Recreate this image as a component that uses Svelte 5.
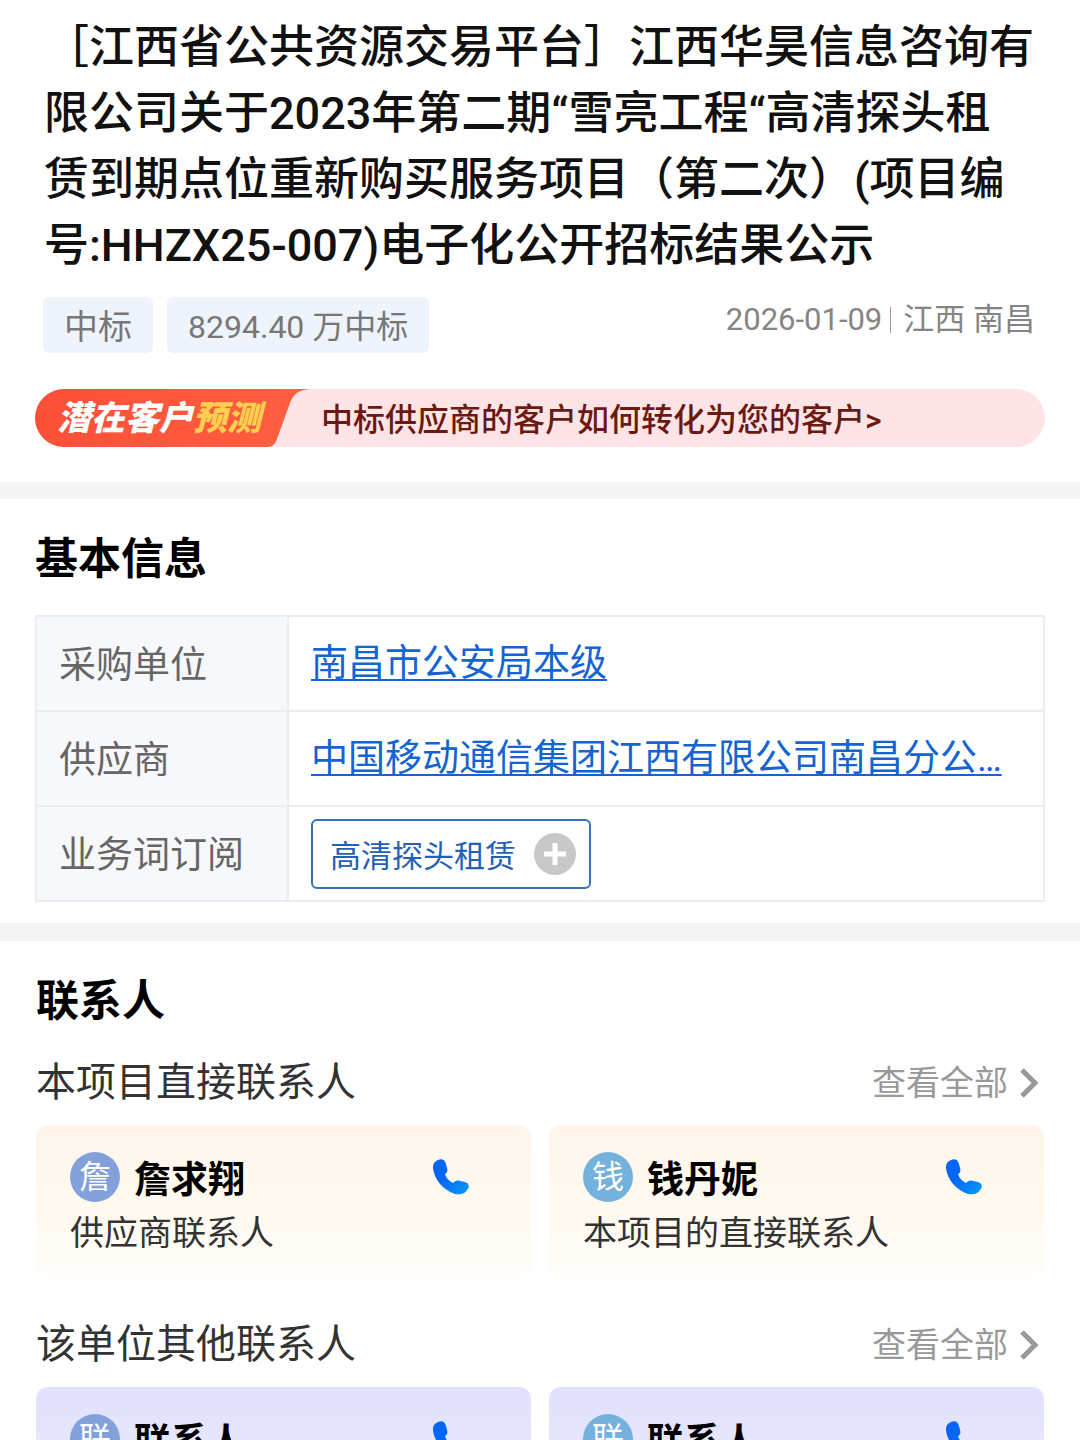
<script>
  const info = [
    { label: '采购单位', link: '南昌市公安局本级' },
    { label: '供应商', link: '中国移动通信集团江西有限公司南昌分公…' },
    { label: '业务词订阅', keyword: '高清探头租赁' },
  ];

  const groups = [
    {
      title: '本项目直接联系人',
      theme: 'warm',
      people: [
        { avatar: '詹', name: '詹求翔', role: '供应商联系人', color: 'indigo' },
        { avatar: '钱', name: '钱丹妮', role: '本项目的直接联系人', color: 'sky' },
      ],
    },
    {
      title: '该单位其他联系人',
      theme: 'violet',
      people: [
        { avatar: '联', name: '联系人', color: 'indigo' },
        { avatar: '联', name: '联系人', color: 'sky' },
      ],
    },
  ];
</script>

<main lang="zh-CN">
  <header class="notice">
    <h1>
      ［江西省公共资源交易平台］江西华昊信息咨询有<br />
      限公司关于2023年第二期“雪亮工程“高清探头租<br />
      赁到期点位重新购买服务项目（第二次）(项目编<br />
      号:HHZX25-007)电子化公开招标结果公示
    </h1>
    <div class="meta">
      <div class="tags">
        <span class="tag stage">中标</span>
        <span class="tag">8294.40 万中标</span>
      </div>
      <div class="origin">
        <time datetime="2026-01-09">2026-01-09</time>
        <span class="place">江西 南昌</span>
      </div>
    </div>
    <a class="banner" href="#forecast">
      <span class="ribbon">
        <svg viewBox="0 0 275 58" preserveAspectRatio="none" aria-hidden="true">
          <defs>
            <linearGradient id="ribbon-fill" x1="0" x2="1">
              <stop offset="0" stop-color="#fd4f38" />
              <stop offset="1" stop-color="#ff6040" />
            </linearGradient>
          </defs>
          <path fill="url(#ribbon-fill)" d="M29 0H275C264 1 259 4 255 14L242 50Q239 58 233 58H29A29 29 0 0 1 29 0Z" />
        </svg>
        <span class="ribbon-text">潜在客户<em>预测</em></span>
      </span>
      <span class="banner-text">中标供应商的客户如何转化为您的客户&gt;</span>
    </a>
  </header>

  <section class="basic">
    <h2>基本信息</h2>
    <table>
      <tbody>
        {#each info as { label, link, keyword }}
          <tr>
            <th scope="row">{label}</th>
            <td>
              {#if link}
                <a class="org" href="#org">{link}</a>
              {/if}
              {#if keyword}
                <button class="keyword" type="button">
                  {keyword}
                  <svg viewBox="0 0 42 42" aria-hidden="true">
                    <circle cx="21" cy="21" r="21" fill="#c8c8c8" />
                    <path d="M21 10V32M10 21H32" stroke="#fff" stroke-width="5" />
                  </svg>
                </button>
              {/if}
            </td>
          </tr>
        {/each}
      </tbody>
    </table>
  </section>

  <section class="contacts">
    <h2>联系人</h2>
    {#each groups as { title, theme, people }}
      <div class="group">
        <div class="group-head">
          <h3>{title}</h3>
          <a class="more" href="#all">
            查看全部
            <svg viewBox="0 0 18 30" aria-hidden="true">
              <path d="M2 2L15 15L2 28" fill="none" stroke="#999" stroke-width="5" />
            </svg>
          </a>
        </div>
        <div class="cards">
          {#each people as { avatar, name, role, color }}
            <article class="card {theme}">
              <div class="person">
                <span class="avatar {color}">{avatar}</span>
                <strong>{name}</strong>
                <button class="call" type="button" aria-label="拨打电话">
                  <svg viewBox="0 0 36 36" aria-hidden="true">
                    <defs>
                      <linearGradient id="call-fill" x1="0" y1="0" x2="1" y2="1">
                        <stop offset="0.4" stop-color="#0565f5" />
                        <stop offset="1" stop-color="#0a9bfb" />
                      </linearGradient>
                    </defs>
                    <path
                      fill="url(#call-fill)"
                      d="M5 1C9 -1 12 1 13 5L14 9C15 12 14 14 12 15C13 19 16 22 20 24C22 22 24 21 27 22L32 23C36 24 37 28 34 31C32 35 27 36 22 35C10 31 1 20 0 9C0 5 1 3 5 1Z"
                    />
                  </svg>
                </button>
              </div>
              {#if role}
                <p>{role}</p>
              {/if}
            </article>
          {/each}
        </div>
      </div>
    {/each}
  </section>
</main>

<style>
  :global(body) {
    background: #fff;
  }

  main {
    height: 100vh;
    overflow: hidden;
    font-family: Roboto, "Noto Sans CJK SC", sans-serif;
    color: #111;
  }

  h1,
  h2,
  h3,
  p {
    margin: 0;
  }

  a {
    text-decoration: none;
  }

  button {
    font-family: inherit;
    background: none;
    border: 0;
    padding: 0;
  }

  svg {
    display: block;
    flex: none;
  }

  .notice {
    padding: 15px 35px 35px;
    border-bottom: 17px solid #f5f5f5;
  }

  h1 {
    padding-left: 9px;
    font-size: 45px;
    line-height: 66px;
    font-weight: 500;
    white-space: nowrap;
  }

  .meta {
    display: flex;
    justify-content: space-between;
    align-items: flex-start;
    padding: 18px 10px 0 8px;
  }

  .tags {
    display: flex;
    gap: 14px;
  }

  .tag {
    padding: 4px 21px 0;
    border-radius: 6px;
    background: #eff4fc;
    color: #777;
    font-size: 32px;
    line-height: 52px;
  }

  .tag.stage {
    font-size: 34px;
  }

  .origin {
    display: flex;
    align-items: center;
    gap: 8px;
    color: #858585;
    font-size: 31px;
    line-height: 46px;
  }

  .place {
    display: flex;
    align-items: center;
    gap: 12px;
  }

  .place::before {
    content: '';
    width: 1px;
    height: 26px;
    background: #999;
  }

  .banner {
    display: flex;
    align-items: center;
    margin-top: 36px;
    border-radius: 29px;
    background: #fee4e7;
    color: #6b1a12;
    font-size: 32px;
    font-weight: 500;
  }

  .ribbon {
    position: relative;
    width: 275px;
    height: 58px;
    margin-right: 11px;
    line-height: 58px;
  }

  .ribbon svg {
    position: absolute;
    inset: 0;
    width: 100%;
    height: 100%;
  }

  .ribbon-text {
    position: relative;
    padding-left: 22px;
    color: #fff;
    font-size: 34px;
    font-style: italic;
    font-weight: 900;
  }

  .ribbon-text em {
    color: #ffd04f;
  }

  .banner-text {
    padding-top: 4px;
    line-height: 54px;
  }

  .basic {
    padding: 30px 35px 21px;
    border-bottom: 18px solid #f5f5f5;
  }

  h2 {
    font-size: 43px;
    line-height: 60px;
    font-weight: 700;
    color: #000;
  }

  table {
    width: 100%;
    margin-top: 26px;
    border-collapse: collapse;
    font-size: 37px;
    line-height: 52px;
  }

  th,
  td {
    box-sizing: border-box;
    height: 95px;
    padding: 0 22px;
    border: 2px solid #ebedf0;
    text-align: left;
  }

  th {
    width: 252px;
    padding-top: 4px;
    background: #f6f8fc;
    color: #666;
    font-weight: 400;
  }

  .org {
    color: #1464d2;
    text-decoration: underline;
    text-decoration-thickness: 2px;
    text-underline-offset: 3px;
    white-space: nowrap;
  }

  .keyword {
    display: flex;
    align-items: center;
    gap: 18px;
    height: 70px;
    padding: 0 13px 0 17px;
    border: 2px solid #3473b8;
    border-radius: 6px;
    color: #2461b4;
    font-size: 31px;
  }

  .keyword svg {
    width: 42px;
    height: 42px;
  }

  .contacts {
    padding: 30px 36px;
  }

  .group {
    padding-top: 22px;
    margin-bottom: 12px;
  }

  .group-head {
    display: flex;
    justify-content: space-between;
    align-items: center;
    height: 60px;
  }

  h3 {
    font-size: 40px;
    line-height: 58px;
    font-weight: 400;
    color: #333;
  }

  .more {
    display: flex;
    align-items: center;
    gap: 12px;
    padding-right: 6px;
    color: #999;
    font-size: 34px;
    line-height: 58px;
  }

  .more svg {
    width: 18px;
    height: 30px;
  }

  .cards {
    display: grid;
    grid-template-columns: 1fr 1fr;
    gap: 18px;
    margin-top: 12px;
  }

  .card {
    min-height: 112px;
    padding: 24px 62px 20px 34px;
    border-radius: 12px;
  }

  .card.warm {
    background: linear-gradient(#fef5eb, #fffaf0 60%, #fffefb);
  }

  .card.violet {
    background: linear-gradient(#e2e1fd, #eeeefe);
  }

  .person {
    display: flex;
    align-items: center;
    height: 56px;
  }

  .avatar {
    width: 50px;
    height: 50px;
    border-radius: 50%;
    color: #fff;
    font-size: 32px;
    line-height: 50px;
    text-align: center;
  }

  .indigo {
    background: #82a1da;
  }

  .sky {
    background: #74b1dc;
  }

  strong {
    margin-left: 14px;
    font-size: 37px;
    font-weight: 700;
    color: #000;
  }

  .call {
    margin-left: auto;
  }

  .call svg {
    width: 36px;
    height: 36px;
  }

  .card p {
    color: #333;
    font-size: 34px;
    line-height: 56px;
  }
</style>
